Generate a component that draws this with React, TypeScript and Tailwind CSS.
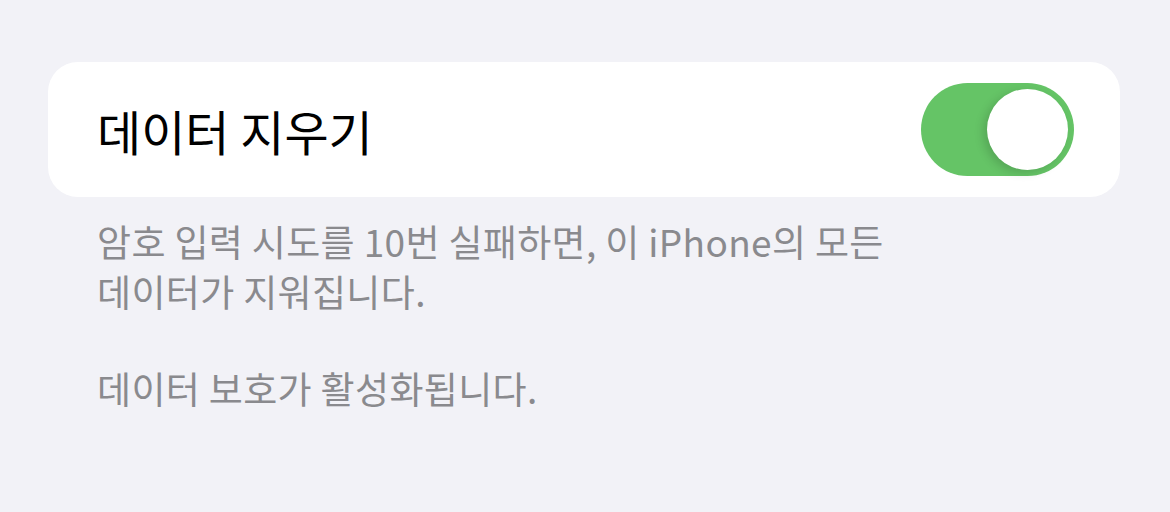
export default function App() {
  return (
    <div
      className="w-[1170px] h-[512px] bg-[#f2f2f7] pt-[62px] pl-[48px] pr-[50px]"
      style={{ fontFamily: '"Noto Sans CJK KR", "Noto Sans", sans-serif' }}
    >
      {/* Row card */}
      <div className="h-[135px] bg-white rounded-[30px] flex items-center justify-between pl-[49px] pr-[46px]">
        <span className="text-[48px] text-black">데이터 지우기</span>
        <div className="w-[153px] h-[93px] rounded-full bg-[#65c466] relative">
          <div className="absolute right-[6px] top-[6px] w-[81px] h-[81px] rounded-full bg-white shadow-[-4px_3px_10px_rgba(0,0,0,0.15)]" />
        </div>
      </div>

      {/* Footer */}
      <div className="pl-[49px] pt-[19px] text-[37px] leading-[50px] text-[#8a8a8e] tracking-[0.35px]">
        <p>암호 입력 시도를 10번 실패하면, 이 iPhone의 모든</p>
        <p>데이터가 지워집니다.</p>
        <p className="mt-[47px]">데이터 보호가 활성화됩니다.</p>
      </div>
    </div>
  );
}
